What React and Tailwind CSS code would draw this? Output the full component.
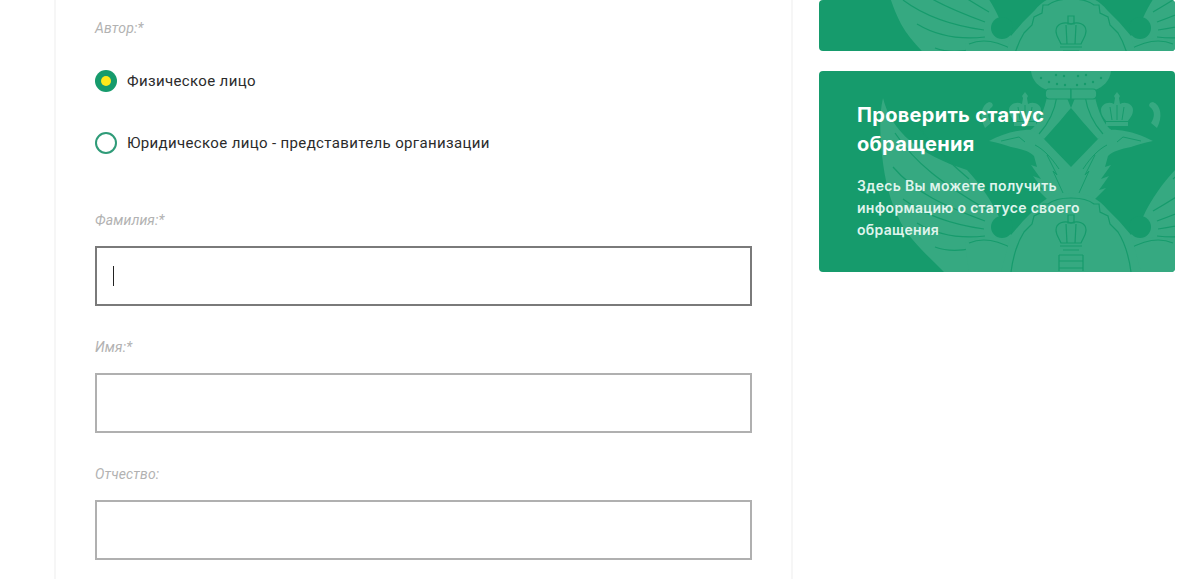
const LIGHT = "#36a981";
const BG = "#169b6c";

const EagleHalf = () => (
  <g>
    {/* wing */}
    <path fill={LIGHT} d="M64 27 C72 60 100 84 148 99 C160 112 172 128 180 146 L196 170 L190 201 L125 201 C108 184 92 170 82 152 C70 128 66 110 63 84 C61 62 60 44 64 27Z" />
    <path fill="none" stroke={BG} strokeWidth="1.2" d="M76 62 C96 92 122 112 170 140 M74 96 C96 122 128 136 166 150 M84 128 C108 146 136 154 165 158 M98 152 C118 164 140 168 166 165 M116 176 C132 182 150 180 172 172 M92 42 C104 66 122 84 150 108" />
    {/* lower band from the joint to the shield */}
    <path fill={LIGHT} d="M146 172 C162 162 180 166 196 172 L200 201 H150Z" />
    <path fill="none" stroke={BG} strokeWidth="1.2" d="M150 172 C164 166 180 170 194 178" />
    {/* ribbon from the big crown */}
    <path fill={LIGHT} d="M229 22 C225 40 220 54 210 60 L225 68 C236 56 246 44 252 37 L246 22Z" />
    <path fill="none" stroke={BG} strokeWidth="1.2" d="M238 25 C236 38 230 52 220 63" />
    {/* head and neck */}
    <path fill={LIGHT} d="M252 96 L225 68 C218 60 212 58 206 59 C192 60 180 65 170 70 C180 72 186 74 192 76 C202 78 210 80 215 85 L218 96 L212 94 L222 108 L214 105 L224 119 L217 117 L230 130 H252Z" />
    <path fill="none" stroke={BG} strokeWidth="1" d="M182 70 L200 66 L206 71 M228 84 L238 104 L234 100 L244 122 M216 74 C224 78 232 86 240 98" />
    {/* shield */}
    <path fill={LIGHT} d="M252 122 C236 122 224 128 216 138 L204 150 L192 164 L182 201 H252Z" />
    <path fill="none" stroke={BG} strokeWidth="1.2" d="M252 127 C240 127 234 129 229 133 L224 133 L223 141 L215 145 L213 153 L205 161 C198 172 194 186 192 201" />
    {/* joint */}
    <circle cx="183" cy="156" r="11" fill={BG} />
    {/* big crown */}
    <path fill={LIGHT} d="M212 0 C213 10 220 16 228 19 H252 V0Z" />
    <path fill={LIGHT} stroke={BG} strokeWidth="1.2" d="M252 18 H230 C225 18 225 28 230 28 H252Z" />
    <g fill={BG}>
      <circle cx="222" cy="7" r="1.2" />
      <circle cx="230" cy="11" r="1.2" />
      <circle cx="238" cy="13" r="1.2" />
      <circle cx="246" cy="14" r="1.2" />
      <circle cx="237" cy="4" r="1.2" />
      <circle cx="245" cy="5" r="1.2" />
    </g>
    {/* small crown */}
    <path fill={LIGHT} d="M206 21 L209 25 L208 27 L209 33 C214 30 222 33 222 39 C222 44 219 47 217 50 H195 C193 47 190 44 190 39 C190 33 198 30 203 33 L204 27 L203 25Z" />
    <rect x="195" y="51" width="22" height="4" fill={LIGHT} />
    <path fill="none" stroke={BG} strokeWidth="1" d="M206 34 V49 M199 36 L201 49 M213 36 L211 49" />
    {/* curl */}
    <path fill={LIGHT} d="M170 31 C162 34 160 46 166 57 L172 52 C168 46 168 40 173 36 C175 34 173 31 170 31Z" />
  </g>
);

const Emblem = ({ className }) => (
  <svg viewBox="0 0 356 201" className={className} aria-hidden="true">
    <EagleHalf />
    <g transform="translate(504 0) scale(-1 1)">
      <EagleHalf />
    </g>
    {/* crown on the shield */}
    <g fill="none" stroke={BG} strokeWidth="1.2">
      <path d="M249 144 h6 v8 h-6Z" />
      <path d="M252 152 C245 149 237 152 237 159 C237 164 240 167 242 172 H262 C264 167 267 164 267 159 C267 152 259 149 252 152Z M247 153 L248 172 M257 153 L256 172" />
      <path d="M241 175 H263 M244 179 H260 M240 184 H264 M240 190 H264 M240 197 H264 M240 184 V200 M264 184 V200" />
    </g>
  </svg>
);

function Field({ label, focused }) {
  return (
    <div>
      <div className="text-[14px] leading-[20px] italic tracking-[0.15px] text-[#b2b2b2]">{label}</div>
      <div className={`mt-[16px] h-[60px] border-2 bg-white pl-[16px] flex items-center ${focused ? "border-[#7a7a7a]" : "border-[#b0b0b0]"}`}>
        {focused && <span className="block w-px h-[20px] bg-[#222]" />}
      </div>
    </div>
  );
}

function Radio({ label, checked }) {
  return (
    <div className="flex items-center gap-[10px] h-[22px]">
      {checked ? (
        <span className="flex items-center justify-center size-[22px] rounded-full bg-[#169b6c] shrink-0">
          <span className="block size-[10px] rounded-full bg-[#ffe81a]" />
        </span>
      ) : (
        <span className="block size-[22px] rounded-full border-2 border-[#2f9b78] bg-white shrink-0" />
      )}
      <span className="text-[15px] leading-[22px] text-[#2b2b2b] tracking-[0.36px]">{label}</span>
    </div>
  );
}

function Promo({ children, first }) {
  return (
    <div className={`relative overflow-hidden rounded-[4px] bg-[#169b6c] ${first ? "h-[51px]" : "h-[201px]"}`}>
      <Emblem className={`absolute left-0 w-[356px] h-[201px] ${first ? "top-[-128px]" : "top-0"}`} />
      {children}
    </div>
  );
}

export default function App() {
  return (
    <div className="h-[579px] overflow-hidden bg-white flex items-start pl-[54px] font-['Roboto','Liberation_Sans',sans-serif]">
      <div className="w-[739px] h-[579px] border-x-2 border-[#f6f6f6] px-[39px] pt-[18px] shrink-0">
        <div className="text-[14px] leading-[20px] italic tracking-[0.15px] text-[#b2b2b2]">Автор:*</div>
        <div className="mt-[32px] flex flex-col gap-[40px]">
          <Radio label="Физическое лицо" checked />
          <Radio label="Юридическое лицо - представитель организации" />
        </div>
        <div className="mt-[56px] flex flex-col gap-[31px]">
          <Field label="Фамилия:*" focused />
          <Field label="Имя:*" />
          <Field label="Отчество:" />
        </div>
      </div>
      <div className="ml-[26px] w-[356px] flex flex-col gap-[20px] shrink-0">
        <Promo first />
        <Promo>
          <div className="relative pl-[38px] pt-[30px] pr-[30px] text-white font-['Inter','Liberation_Sans',sans-serif]">
            <div className="text-[20px] leading-[29px] font-bold tracking-[0.3px]">Проверить статус<br />обращения</div>
            <div className="mt-[16px] text-[14px] leading-[22px] font-semibold tracking-[0.3px] text-[#dff4ec]">Здесь Вы можете получить<br />информацию о статусе своего<br />обращения</div>
          </div>
        </Promo>
      </div>
    </div>
  );
}
